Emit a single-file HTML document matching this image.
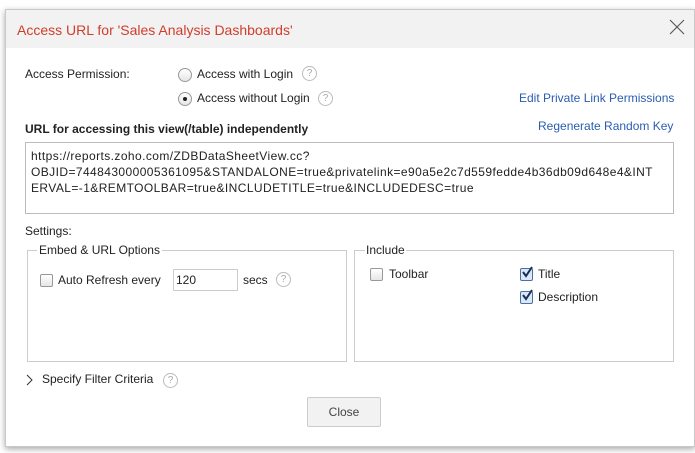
<!DOCTYPE html>
<html><head><style>
body{margin:0;width:695px;height:453px;background:#fff;font-family:"Liberation Sans",sans-serif;font-size:12px;color:#222;position:relative;overflow:hidden}
.dlg{position:absolute;left:5px;top:9px;width:688px;height:436px;background:#fff;border:1px solid #c8c8c8;box-shadow:0 2px 6px rgba(0,0,0,.35)}
.hdr{position:absolute;left:0;top:0;right:0;height:38px;background:#f2f2f2}
.a{position:absolute;white-space:nowrap}
.q{position:absolute;width:13px;height:13px;border:1px solid #bbb;border-radius:50%;color:#aaa;font-size:10px;text-align:center;line-height:13px}
.rad{position:absolute;width:12px;height:12px;border:1px solid #999;border-radius:50%;background:linear-gradient(#fff,#e6e6e6)}
.cb{position:absolute;width:11px;height:11px;border:1px solid #999;border-radius:2px;background:linear-gradient(#fff,#e6e6e6)}
.lk{color:#2a5db0}
.box{position:absolute;border:1px solid #ccc}
</style></head><body>
<div class="dlg">
<div class="hdr"></div>
<div class="a" style="left:11px;top:12px;font-size:14px;color:#d13d2c">Access URL for 'Sales Analysis Dashboards'</div>
<svg class="a" style="left:663px;top:9px" width="16" height="16"><path d="M1 1L15 15M15 1L1 15" stroke="#555" stroke-width="1.1"/></svg>
<div class="a" style="left:19px;top:57px">Access Permission:</div>
<div class="rad" style="left:172px;top:58px"></div>
<div class="a" style="left:191px;top:57px">Access with Login</div>
<div class="q" style="left:296px;top:56px">?</div>
<div class="rad" style="left:172px;top:82px"><div style="position:absolute;left:4px;top:4px;width:4px;height:4px;border-radius:50%;background:#222"></div></div>
<div class="a" style="left:191px;top:81px">Access without Login</div>
<div class="q" style="left:312px;top:81px">?</div>
<div class="a lk" style="left:513px;top:81px">Edit Private Link Permissions</div>
<div class="a lk" style="left:532px;top:109px">Regenerate Random Key</div>
<div class="a" style="left:19px;top:112px;font-weight:bold">URL for accessing this view(/table) independently</div>
<div class="box" style="left:19px;top:132px;width:647px;height:70px;border-color:#bbb"></div>
<div class="a" style="left:25px;top:138px;line-height:16px;letter-spacing:0.42px">https://reports.zoho.com/ZDBDataSheetView.cc?<br>OBJID=744843000005361095&amp;STANDALONE=true&amp;privatelink=e90a5e2c7d559fedde4b36db09d648e4&amp;INT<br>ERVAL=-1&amp;REMTOOLBAR=true&amp;INCLUDETITLE=true&amp;INCLUDEDESC=true</div>
<div class="a" style="left:19px;top:214px">Settings:</div>
<div class="box" style="left:21px;top:240px;width:318px;height:110px"></div>
<div class="a" style="left:31px;top:233px;background:#fff;padding:0 2px">Embed &amp; URL Options</div>
<div class="cb" style="left:34px;top:264px"></div>
<div class="a" style="left:52px;top:263px">Auto Refresh every</div>
<div class="box" style="left:167px;top:259px;width:63px;height:20px"></div>
<div class="a" style="left:170px;top:263px">120</div>
<div class="a" style="left:237px;top:263px">secs</div>
<div class="q" style="left:270px;top:262px">?</div>
<div class="box" style="left:348px;top:240px;width:318px;height:110px"></div>
<div class="a" style="left:359px;top:233px;background:#fff;padding:0 1px">Include</div>
<div class="cb" style="left:364px;top:258px"></div>
<div class="a" style="left:383px;top:257px">Toolbar</div>
<div class="cb" style="left:514px;top:258px;border-color:#4a6fa5;background:#dbe8f7"></div>
<svg class="a" style="left:514px;top:255px" width="14" height="14"><path d="M3 7L6 11L12 2" stroke="#1a2f55" stroke-width="2" fill="none"/></svg>
<div class="a" style="left:532px;top:257px">Title</div>
<div class="cb" style="left:514px;top:281px;border-color:#4a6fa5;background:#dbe8f7"></div>
<svg class="a" style="left:514px;top:278px" width="14" height="14"><path d="M3 7L6 11L12 2" stroke="#1a2f55" stroke-width="2" fill="none"/></svg>
<div class="a" style="left:532px;top:280px">Description</div>
<svg class="a" style="left:20px;top:364px" width="8" height="12"><path d="M1 1L6 6L1 11" stroke="#333" fill="none"/></svg>
<div class="a" style="left:36px;top:362px">Specify Filter Criteria</div>
<div class="q" style="left:157px;top:363px">?</div>
<div class="a" style="left:301px;top:387px;width:72px;height:28px;border:1px solid #ccc;border-radius:2px;background:#f2f2f2;text-align:center;line-height:28px;color:#444">Close</div>
</div>
</body></html>
